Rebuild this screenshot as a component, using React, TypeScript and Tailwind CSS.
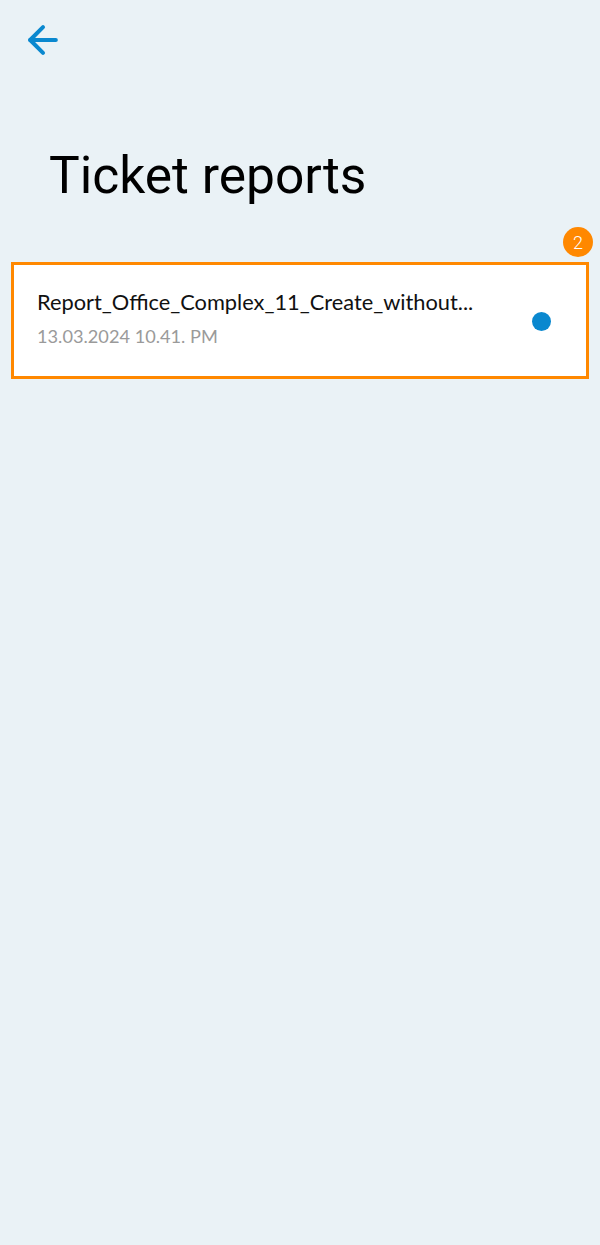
export default function App() {
  return (
    <div className="min-h-[1245px] w-full bg-[#eaf2f6]">
      <div className="flex h-[80px] items-center pl-[21px]">
        <button className="flex h-[44px] w-[44px] items-center justify-center text-[#0a88cf]">
          <svg
            width="44"
            height="44"
            viewBox="0 0 24 24"
            fill="none"
            stroke="currentColor"
            strokeWidth="2.2"
            strokeLinecap="round"
            strokeLinejoin="round"
          >
            <path d="m12 19-7-7 7-7" />
            <path d="M19 12H5" />
          </svg>
        </button>
      </div>

      <h1 className="mt-[60px] pl-[49px] font-['Roboto',sans-serif] text-[51.5px] leading-[72px] text-black">
        Ticket reports
      </h1>

      <div className="relative mx-[11px] mt-[50px]">
        <div className="flex h-[117px] items-start border-[3px] border-[#ff8800] bg-white pl-[23px] pr-[35px]">
          <div className="min-w-0 flex-1 pt-[24px] font-['Lato',sans-serif]">
            <p className="whitespace-nowrap text-[21.8px] leading-[26px] text-[#111]">
              Report_Office_Complex_11_Create_without...
            </p>
            <p className="mt-[10px] text-[18.2px] leading-[22px] text-[#9a9a9a]">
              13.03.2024 10.41. PM
            </p>
          </div>
          <span className="mt-[47px] h-[19px] w-[19px] shrink-0 rounded-full bg-[#0a88cf]" />
        </div>
        <span className="absolute -top-[35px] right-[-4px] flex h-[30px] w-[30px] items-center justify-center rounded-full bg-[#ff8800] font-['Roboto',sans-serif] text-[18px] font-light text-white">
          2
        </span>
      </div>
    </div>
  );
}
